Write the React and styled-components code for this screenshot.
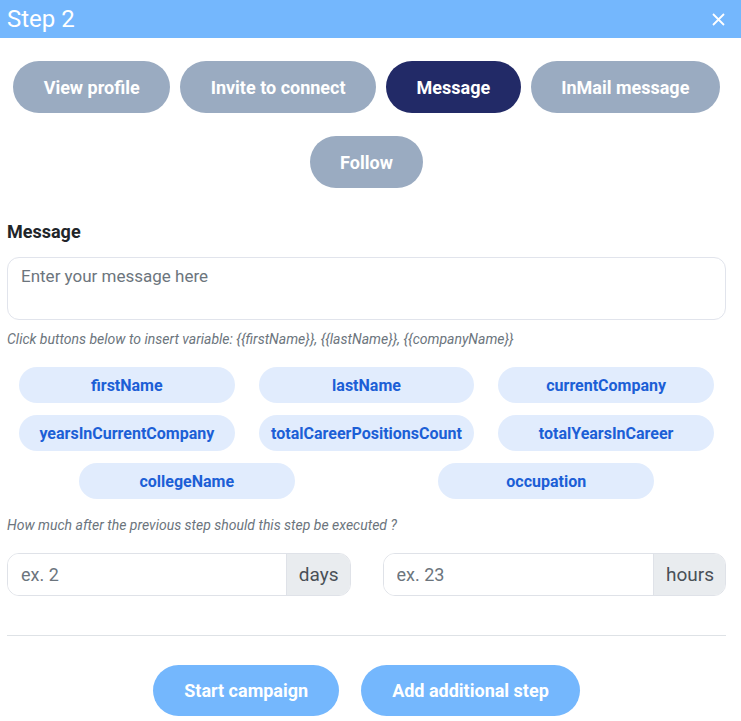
import React from 'react';
import styled, { createGlobalStyle } from 'styled-components';

const GlobalStyle = createGlobalStyle`
    * { box-sizing: border-box; }
    body {
        margin: 0;
        font-family: Roboto, "Liberation Sans", Arial, sans-serif;
        background: #ffffff;
    }
`;

const actions = ['View profile', 'Invite to connect', 'Message', 'InMail message', 'Follow'];
const variables = [
    'firstName', 'lastName', 'currentCompany',
    'yearsInCurrentCompany', 'totalCareerPositionsCount', 'totalYearsInCareer',
    'collegeName', 'occupation',
];

const App = () => {
    return (
        <React.Fragment>
            <GlobalStyle />
            <Modal>
                <Header>
                    <Title>Step 2</Title>
                    <CloseButton>
                        <svg width="13" height="13" viewBox="0 0 13 13">
                            <path d="M1 1L12 12M12 1L1 12" stroke="#ffffff" strokeWidth="1.8" fill="none" />
                        </svg>
                    </CloseButton>
                </Header>
                <Body>
                    <ActionRow>
                        {actions.map((a) => (
                            <ActionButton key={a} active={a === 'Message'}>{a}</ActionButton>
                        ))}
                    </ActionRow>
                    <Label>Message</Label>
                    <MessageArea placeholder="Enter your message here" />
                    <Hint>Click buttons below to insert variable: {'{{firstName}}'}, {'{{lastName}}'}, {'{{companyName}}'}</Hint>
                    <ChipGrid>
                        {variables.map((v) => (
                            <Chip key={v}>{v}</Chip>
                        ))}
                    </ChipGrid>
                    <Hint>How much after the previous step should this step be executed ?</Hint>
                    <DelayRow>
                        <InputGroup>
                            <DelayInput placeholder="ex. 2" />
                            <Addon>days</Addon>
                        </InputGroup>
                        <InputGroup>
                            <DelayInput placeholder="ex. 23" />
                            <Addon>hours</Addon>
                        </InputGroup>
                    </DelayRow>
                    <Divider />
                    <Footer>
                        <PrimaryButton>Start campaign</PrimaryButton>
                        <PrimaryButton>Add additional step</PrimaryButton>
                    </Footer>
                </Body>
            </Modal>
        </React.Fragment>
    );
};

const Modal = styled.div`
    width: 741px;
    min-height: 721px;
    background: #ffffff;
`;

const Header = styled.header`
    display: flex;
    align-items: center;
    justify-content: space-between;
    height: 38px;
    padding: 0 16px 0 7px;
    background: #74b7fd;
`;

const Title = styled.h2`
    margin: 0;
    font-size: 24px;
    font-weight: 400;
    color: #ffffff;
`;

const CloseButton = styled.div`
    display: flex;
    align-items: center;
    cursor: pointer;
`;

const Body = styled.div`
    padding: 23px 15px 0 7px;
`;

const ActionRow = styled.div`
    display: flex;
    flex-wrap: wrap;
    justify-content: center;
    column-gap: 10px;
    row-gap: 23px;
`;

const ActionButton = styled.button`
    height: 52px;
    padding: 0 30.5px;
    border: none;
    border-radius: 26px;
    background: ${(p) => (p.active ? '#222a67' : '#9aabc1')};
    color: #ffffff;
    font-family: inherit;
    font-size: 18px;
    font-weight: 700;
    cursor: pointer;
`;

const Label = styled.div`
    margin-top: 33px;
    font-size: 18px;
    font-weight: 700;
    color: #212529;
`;

const MessageArea = styled.textarea`
    display: block;
    width: 100%;
    height: 63px;
    margin-top: 15px;
    padding: 8px 13px;
    border: 1px solid #e1e4ec;
    border-radius: 12px;
    resize: none;
    outline: none;
    font-family: inherit;
    font-size: 17px;
    &::placeholder { color: #6c757d; }
`;

const Hint = styled.div`
    margin-top: 11px;
    font-size: 14px;
    font-style: italic;
    color: #6c757d;
`;

const ChipGrid = styled.div`
    display: flex;
    flex-wrap: wrap;
    justify-content: space-around;
    row-gap: 12px;
    margin-top: 20px;
    margin-bottom: 18px;
`;

const Chip = styled.button`
    width: 30%;
    height: 36px;
    border: none;
    border-radius: 18px;
    background: #e1ecfd;
    color: #1c5fd6;
    font-family: inherit;
    font-size: 16px;
    font-weight: 700;
    cursor: pointer;
`;

const DelayRow = styled.div`
    display: grid;
    grid-template-columns: 1fr 1fr;
    column-gap: 32px;
    margin-top: 20px;
`;

const InputGroup = styled.div`
    display: flex;
    height: 43px;
    border: 1px solid #dfe2e8;
    border-radius: 12px;
    overflow: hidden;
`;

const DelayInput = styled.input`
    flex: 1;
    min-width: 0;
    padding: 0 13px;
    border: none;
    outline: none;
    font-family: inherit;
    font-size: 18px;
    &::placeholder { color: #6c757d; }
`;

const Addon = styled.span`
    display: flex;
    align-items: center;
    padding: 0 11px 0 12px;
    border-left: 1px solid #dfe2e8;
    background: #e9ecef;
    color: #495057;
    font-size: 19px;
`;

const Divider = styled.hr`
    margin: 39px 0 0;
    border: none;
    border-top: 1px solid #dee2e6;
`;

const Footer = styled.div`
    display: flex;
    justify-content: center;
    gap: 22px;
    padding-top: 29px;
`;

const PrimaryButton = styled.button`
    height: 51px;
    padding: 0 31px;
    border: none;
    border-radius: 26px;
    background: #74b7fd;
    color: #ffffff;
    font-family: inherit;
    font-size: 18px;
    font-weight: 700;
    cursor: pointer;
`;

export default App;
